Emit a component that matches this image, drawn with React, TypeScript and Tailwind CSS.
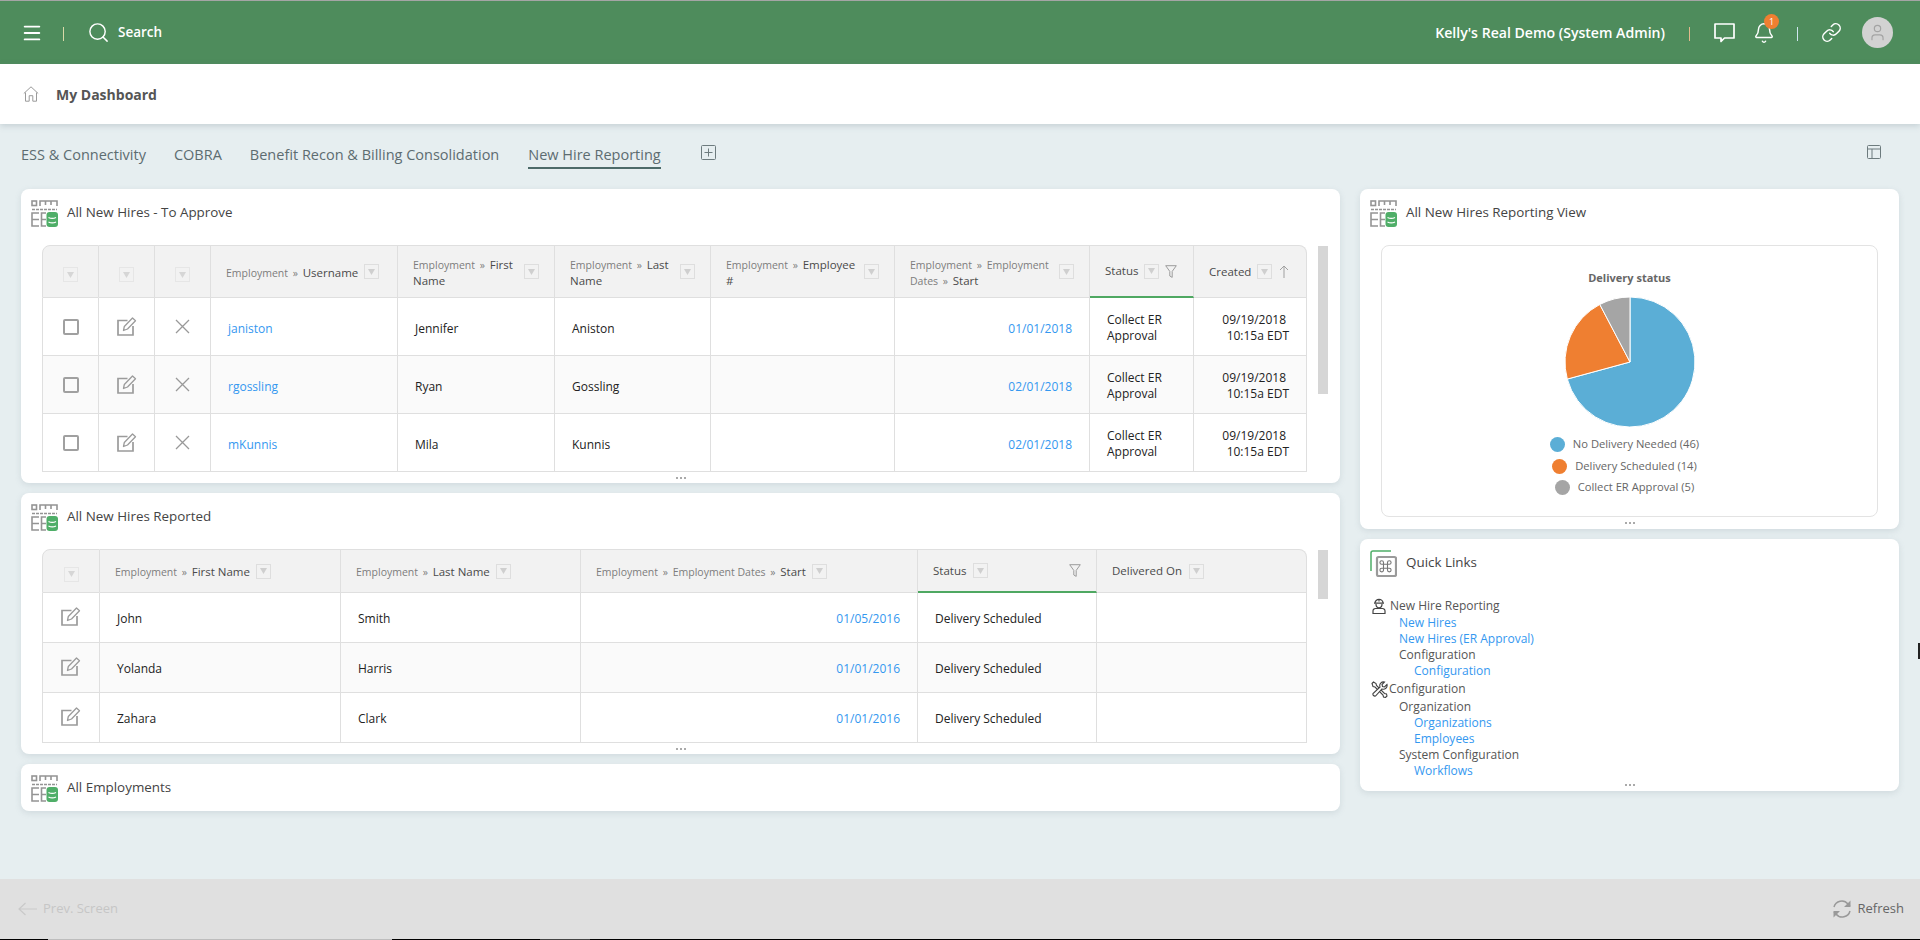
import { Bell, Link, Menu, Search, User } from 'lucide-react'

const font = { fontFamily: '"Open Sans", sans-serif' }

function GridDbIcon() {
  return (
    <svg width="27" height="27" viewBox="0 0 27 27" fill="none" className="shrink-0">
      <g stroke="#949494" strokeWidth="1.6">
        <rect x="1" y="1" width="4.5" height="4.5" />
        <path d="M9 6V1h17v5M14.5 1v4M20 1v4" />
        <path d="M1 9.500h25" strokeDasharray="3 1" />
        <path d="M8 13H1v13h7M1 19.500h7M15 13H10.500v13H15M10.500 19.500H15" />
      </g>
      <rect x="15.500" y="12" width="11.500" height="15" rx="3" fill="#4fae68" />
      <path d="M17.500 17.500c2 1 5.500 1 7.500 0M17.500 22c2 1 5.500 1 7.500 0" stroke="#fff" strokeWidth="1.3" />
    </svg>
  )
}

function QuickLinksIcon() {
  return (
    <svg width="27" height="27" viewBox="0 0 27 27" fill="none" className="shrink-0">
      <path d="M21 1H3a2 2 0 0 0-2 2v18" stroke="#4fae68" strokeWidth="1.5" />
      <rect x="7" y="7" width="19" height="19" rx="1.5" stroke="#9a9a9a" strokeWidth="2.2" fill="#fff" />
      <path
        d="M13.500 14.500v-2a1.800 1.800 0 1 0-1.800 1.800h7.600a1.800 1.800 0 1 0-1.800-1.800v7.600a1.800 1.800 0 1 0 1.800-1.800h-7.600a1.800 1.800 0 1 0 1.800 1.800z"
        stroke="#777"
        strokeWidth="1.1"
      />
    </svg>
  )
}

function HeadBox({ faint }: { faint?: boolean }) {
  return (
    <span
      className={`inline-flex h-[15px] w-[15px] shrink-0 items-center justify-center border ${
        faint ? 'border-[#e6e6e6]' : 'border-[#dedede]'
      }`}
    >
      <svg width="7" height="6" viewBox="0 0 7 6">
        <path d="M0 0h7L3.500 6z" fill={faint ? '#d6d6d6' : '#cfcfcf'} />
      </svg>
    </span>
  )
}

function EditIcon() {
  return (
    <svg width="20" height="19" viewBox="0 0 20 19" fill="none" stroke="#9b9b9b">
      <path d="M10.500 3.500H1v14.500h15V9" strokeWidth="1.700" />
      <path d="M6.500 13.500l.8-4L15.500 1l3 2.700-8 8.300z" strokeWidth="1.300" strokeLinejoin="round" />
    </svg>
  )
}

function CloseIcon() {
  return (
    <svg width="15" height="15" viewBox="0 0 15 15" fill="none" stroke="#999" strokeWidth="1.3">
      <path d="M1 1l13 13M14 1L1 14" />
    </svg>
  )
}

function FilterIcon() {
  return (
    <svg width="12" height="13" viewBox="0 0 12 13" fill="none" stroke="#9c9c9c" strokeWidth="1">
      <path d="M.7.7h10.600L7.200 6.400v6L4.800 11V6.400z" />
    </svg>
  )
}

function Dots() {
  return (
    <div className="flex h-[11px] items-center justify-center gap-[2px]">
      <span className="h-[2px] w-[2px] bg-[#aaa]" />
      <span className="h-[2px] w-[2px] bg-[#aaa]" />
      <span className="h-[2px] w-[2px] bg-[#aaa]" />
    </div>
  )
}

function Crumb({ parts, last }: { parts: string[]; last: string }) {
  return (
    <div className="flex items-center gap-[6px] text-left">
      <span className="leading-[14px]">
        {parts.map((p) => (
          <span key={p} className="text-[10.5px] text-[#7d7d7d]">
            {p} <span className="mx-[2px]">»</span>{' '}
          </span>
        ))}
        <span className="text-[11.5px] text-[#4a4a4a]">{last}</span>
      </span>
      <HeadBox />
    </div>
  )
}

const thBase = 'border-r border-b border-t border-[#dfdfdf] bg-[#f2f2f2] px-[15px] align-middle font-normal'
const tdBase = 'border-r border-b border-[#dfdfdf] px-[17px] text-[12px] text-[#222] align-middle'

const approveRows = [
  { user: 'janiston', first: 'Jennifer', last: 'Aniston', start: '01/01/2018' },
  { user: 'rgossling', first: 'Ryan', last: 'Gossling', start: '02/01/2018' },
  { user: 'mKunnis', first: 'Mila', last: 'Kunnis', start: '02/01/2018' },
]

const reportedRows = [
  { first: 'John', last: 'Smith', start: '01/05/2016' },
  { first: 'Yolanda', last: 'Harris', start: '01/01/2016' },
  { first: 'Zahara', last: 'Clark', start: '01/01/2016' },
]

function ApproveTable() {
  return (
    <table className="w-[1265px] table-fixed border-separate border-spacing-0">
      <thead>
        <tr className="h-[53px]">
          <th className={`${thBase} w-[57px] rounded-tl-[8px] border-l !px-0`}>
            <HeadBox faint />
          </th>
          <th className={`${thBase} w-[56px] !px-0`}>
            <HeadBox faint />
          </th>
          <th className={`${thBase} w-[56px] !px-0`}>
            <HeadBox faint />
          </th>
          <th className={`${thBase} w-[187px]`}>
            <Crumb parts={['Employment']} last="Username" />
          </th>
          <th className={`${thBase} w-[157px]`}>
            <Crumb parts={['Employment']} last="First Name" />
          </th>
          <th className={`${thBase} w-[156px]`}>
            <Crumb parts={['Employment']} last="Last Name" />
          </th>
          <th className={`${thBase} w-[184px]`}>
            <Crumb parts={['Employment']} last="Employee #" />
          </th>
          <th className={`${thBase} w-[195px]`}>
            <Crumb parts={['Employment', 'Employment Dates']} last="Start" />
          </th>
          <th className={`${thBase} w-[104px] !border-b-2 !border-b-[#4fa862] !pr-[8px]`}>
            <div className="flex items-center gap-[6px] text-[11.5px] text-[#4a4a4a]">
              Status <HeadBox /> <FilterIcon />
            </div>
          </th>
          <th className={`${thBase} w-[113px] rounded-tr-[8px] !pr-[8px]`}>
            <div className="flex items-center gap-[6px] text-[11.5px] text-[#4a4a4a]">
              Created <HeadBox />
              <svg width="10" height="13" viewBox="0 0 10 13" fill="none" stroke="#a0a0a0" strokeWidth="1" className="ml-px">
                <path d="M5 13V1M1 5l4-4 4 4" />
              </svg>
            </div>
          </th>
        </tr>
      </thead>
      <tbody>
        {approveRows.map((r, i) => (
          <tr key={r.user} className={`h-[58px] ${i === 1 ? 'bg-[#fafafa]' : 'bg-white'}`}>
            <td className={`${tdBase} border-l !px-0`}>
              <div className="flex justify-center">
                <span className="h-[16px] w-[16px] rounded-[2px] border-2 border-[#a0a0a0]" />
              </div>
            </td>
            <td className={`${tdBase} !px-0`}>
              <div className="flex justify-center">
                <EditIcon />
              </div>
            </td>
            <td className={`${tdBase} !px-0`}>
              <div className="flex justify-center">
                <CloseIcon />
              </div>
            </td>
            <td className={`${tdBase} pt-[4px]`}>
              <a className="text-[#3498f0]">{r.user}</a>
            </td>
            <td className={`${tdBase} pt-[4px]`}>{r.first}</td>
            <td className={`${tdBase} pt-[4px]`}>{r.last}</td>
            <td className={tdBase} />
            <td className={`${tdBase} pt-[4px] text-right text-[#3498f0]`}>{r.start}</td>
            <td className={`${tdBase} pt-[2px] leading-[16px]`}>
              Collect ER
              <br />
              Approval
            </td>
            <td className={`${tdBase} !pl-0 pt-[2px] text-right leading-[16px]`}>
              <span className="pr-[3px]">09/19/2018</span>
              <br />
              10:15a EDT
            </td>
          </tr>
        ))}
      </tbody>
    </table>
  )
}

function ReportedTable() {
  return (
    <table className="w-[1265px] table-fixed border-separate border-spacing-0">
      <thead>
        <tr className="h-[44px]">
          <th className={`${thBase} w-[58px] rounded-tl-[8px] border-l !px-0`}>
            <HeadBox faint />
          </th>
          <th className={`${thBase} w-[241px]`}>
            <Crumb parts={['Employment']} last="First Name" />
          </th>
          <th className={`${thBase} w-[240px]`}>
            <Crumb parts={['Employment']} last="Last Name" />
          </th>
          <th className={`${thBase} w-[337px]`}>
            <Crumb parts={['Employment', 'Employment Dates']} last="Start" />
          </th>
          <th className={`${thBase} w-[179px] !border-b-2 !border-b-[#4fa862]`}>
            <div className="flex items-center justify-between text-[11.5px] text-[#4a4a4a]">
              <span className="flex items-center gap-[7px]">
                Status <HeadBox />
              </span>
              <FilterIcon />
            </div>
          </th>
          <th className={`${thBase} rounded-tr-[8px]`}>
            <div className="flex items-center gap-[7px] text-[11.5px] text-[#4a4a4a]">
              Delivered On <HeadBox />
            </div>
          </th>
        </tr>
      </thead>
      <tbody>
        {reportedRows.map((r, i) => (
          <tr key={r.first} className={`h-[50px] ${i === 1 ? 'bg-[#fafafa]' : 'bg-white'}`}>
            <td className={`${tdBase} border-l !px-0`}>
              <div className="mb-[2px] flex justify-center">
                <EditIcon />
              </div>
            </td>
            <td className={`${tdBase} pt-[2px]`}>{r.first}</td>
            <td className={`${tdBase} pt-[2px]`}>{r.last}</td>
            <td className={`${tdBase} pt-[2px] text-right text-[#3498f0]`}>{r.start}</td>
            <td className={`${tdBase} pt-[2px]`}>Delivery Scheduled</td>
            <td className={tdBase} />
          </tr>
        ))}
      </tbody>
    </table>
  )
}

function Card({ title, icon, children }: { title: string; icon?: React.ReactNode; children?: React.ReactNode }) {
  return (
    <section className="rounded-[8px] bg-white shadow-[0_2px_6px_rgba(120,140,150,0.2)]">
      <div className="flex items-center gap-[9px] pt-[11px] pl-[10px]">
        {icon ?? <GridDbIcon />}
        <h2 className="pb-[2px] text-[13.4px] font-medium text-[#444]">{title}</h2>
      </div>
      {children}
    </section>
  )
}

function PieChart() {
  const r = 65
  const arc = (deg: number) => {
    const a = (deg * Math.PI) / 180
    return `${r + r * Math.sin(a)} ${r - r * Math.cos(a)}`
  }
  const slices = [
    { from: 0, to: (46 / 65) * 360, fill: '#5baed6' },
    { from: (46 / 65) * 360, to: (60 / 65) * 360, fill: '#ef7f31' },
    { from: (60 / 65) * 360, to: 360, fill: '#a5a5a5' },
  ]
  return (
    <svg width="130" height="130" viewBox="0 0 130 130">
      {slices.map((s) => (
        <path
          key={s.fill}
          d={`M${r} ${r}L${arc(s.from)}A${r} ${r} 0 ${s.to - s.from > 180 ? 1 : 0} 1 ${arc(s.to)}Z`}
          fill={s.fill}
          stroke="#fff"
          strokeWidth="1"
        />
      ))}
    </svg>
  )
}

const legend = [
  { label: 'No Delivery Needed (46)', color: 'bg-[#5baed6]' },
  { label: 'Delivery Scheduled (14)', color: 'bg-[#ef7f31]' },
  { label: 'Collect ER Approval (5)', color: 'bg-[#a5a5a5]' },
]

function QuickLine({ text, link, indent }: { text: string; link?: boolean; indent: 1 | 2 }) {
  return (
    <div
      className={`h-[16px] leading-[16px] ${indent === 1 ? 'pl-[39px]' : 'pl-[54px]'} ${
        link ? 'text-[#3498f0]' : 'text-[#555]'
      }`}
    >
      {text}
    </div>
  )
}

export default function App() {
  return (
    <div className="relative flex h-screen flex-col overflow-hidden bg-[#e6eef0]" style={font}>
      <header className="flex h-[64px] shrink-0 items-center border-t border-[#a5a5a5] bg-[#4e8c5c] text-white">
        <Menu size={22} strokeWidth={2} className="ml-[21px]" />
        <span className="ml-[20px] mt-[3px] h-[14px] w-px bg-[#d9d9a8]" />
        <Search size={23} strokeWidth={1.5} className="ml-[23px]" />
        <span className="ml-[8px] text-[13.5px] font-semibold">Search</span>
        <span className="ml-auto text-[14.1px] font-semibold">Kelly's Real Demo (System Admin)</span>
        <span className="ml-[24px] mt-[3px] h-[14px] w-px bg-[#e3b98c]" />
        <svg width="21" height="20" viewBox="0 0 21 20" fill="none" stroke="#fff" strokeWidth="1.7" className="ml-[24px]">
          <path d="M1 1h19v14h-9.500L7 18.500V15H1z" strokeLinejoin="round" />
        </svg>
        <span className="relative ml-[18px] flex">
          <Bell size={22} strokeWidth={1.6} />
          <span className="absolute -top-[8px] left-[11px] flex h-[15px] w-[15px] items-center justify-center rounded-full bg-[#ef7f31] text-[9px] leading-none">
            1
          </span>
        </span>
        <span className="ml-[22px] mt-[3px] h-[14px] w-px bg-[#cfe6f0]" />
        <Link size={21} strokeWidth={1.7} className="ml-[23px]" />
        <span className="ml-[20px] mr-[27px] flex h-[31px] w-[31px] items-center justify-center rounded-full bg-[#d2d2d2]">
          <User size={19} strokeWidth={1.5} className="text-[#a3a3a3]" />
        </span>
      </header>

      <div className="z-10 flex h-[60px] shrink-0 items-center bg-white pl-[23px] shadow-[0_2px_6px_rgba(100,120,130,0.25)]">
        <svg width="16" height="16" viewBox="0 0 16 16" fill="none" stroke="#9a9a9a" strokeWidth="1">
          <path d="M.8 7.500 8 .8l7.200 6.700M2.500 6.500v8.700h3.700V9.700h3.600v5.500h3.700V6.500" />
        </svg>
        <span className="ml-[17px] text-[14px] font-bold text-[#555]">My Dashboard</span>
      </div>

      <nav className="flex h-[65px] shrink-0 items-start pt-[20px] pl-[21px] text-[14.5px] text-[#5d6c70]">
        <span className="mr-[28px] h-[25px]">ESS &amp; Connectivity</span>
        <span className="mr-[28px] h-[25px]">COBRA</span>
        <span className="mr-[29px] h-[25px]">Benefit Recon &amp; Billing Consolidation</span>
        <span className="h-[25px] border-b-2 border-[#4d6a69]">New Hire Reporting</span>
        <svg width="15" height="15" viewBox="0 0 15 15" fill="none" stroke="#6d7b7e" className="ml-[40px] mt-[1px]">
          <rect x=".5" y=".5" width="14" height="14" rx="1" />
          <path d="M7.500 3.500v8M3.500 7.500h8" />
        </svg>
        <svg width="14" height="14" viewBox="0 0 14 14" fill="none" stroke="#6d7b7e" className="ml-auto mr-[39px] mt-[1px]">
          <rect x=".5" y=".5" width="13" height="13" rx="1" />
          <path d="M.5 4h13M5 4v9.500" />
        </svg>
      </nav>

      <main className="flex min-h-0 flex-1 items-start gap-[20px] px-[21px]">
        <div className="flex w-[1319px] shrink-0 flex-col gap-[10px]">
          <Card title="All New Hires - To Approve">
            <div className="mt-[18px] flex items-start pl-[21px]">
              <ApproveTable />
              <div className="ml-[11px] mt-px h-[148px] w-[10px] bg-[#d6d6d6]" />
            </div>
            <Dots />
          </Card>
          <Card title="All New Hires Reported">
            <div className="mt-[18px] flex items-start pl-[21px]">
              <ReportedTable />
              <div className="ml-[11px] mt-px h-[49px] w-[10px] bg-[#d6d6d6]" />
            </div>
            <Dots />
          </Card>
          <Card title="All Employments">
            <div className="h-[9px]" />
          </Card>
        </div>

        <div className="flex w-[539px] shrink-0 flex-col gap-[10px]">
          <Card title="All New Hires Reporting View">
            <div className="mx-[21px] mt-[18px] flex h-[272px] flex-col items-center rounded-[8px] border border-[#e3e3e3] pt-[24px]">
              <div className="text-[11px] font-bold leading-[16px] text-[#666]">Delivery status</div>
              <div className="mt-[11px] flex">
                <PieChart />
              </div>
              <div className="mr-[10px] mt-[7px] flex flex-col items-center">
                {legend.map((l) => (
                  <div key={l.label} className="flex h-[21.4px] items-center gap-[8px] text-[11.2px] text-[#666]">
                    <span className={`h-[15px] w-[15px] rounded-full ${l.color}`} />
                    {l.label}
                  </div>
                ))}
              </div>
            </div>
            <Dots />
            <div className="h-px" />
          </Card>

          <Card title="Quick Links" icon={<QuickLinksIcon />}>
            <div className="mt-[20px] text-[12px]">
              <div className="flex h-[18px] items-center gap-[4px] pl-[12px] text-[#555]">
                <svg width="14" height="16" viewBox="0 0 14 16" fill="none" stroke="#444" strokeWidth="1.2">
                  <path d="M3 5a4 3.600 0 0 1 8 0M2 5.200h10M4 6c0 5 6 5 6 0" />
                  <path d="M1 15.500V13a2.500 2.500 0 0 1 2.500-2.500h7A2.500 2.500 0 0 1 13 13v2.500z" />
                  <path d="M7 1v2.500" />
                </svg>
                New Hire Reporting
              </div>
              <QuickLine text="New Hires" link indent={1} />
              <QuickLine text="New Hires (ER Approval)" link indent={1} />
              <QuickLine text="Configuration" indent={1} />
              <QuickLine text="Configuration" link indent={2} />
              <div className="flex h-[20px] items-center gap-[1px] pl-[11px] text-[#555]">
                <svg width="17" height="17" viewBox="0 0 17 17" fill="none" stroke="#444" strokeWidth="1.1">
                  <path d="M1 2.500 2.500 1l2.500 1.500.5 2 8 8 2 .5.5 2-1.500 1.500-2-.5-.5-2-8-8-2-.5z" />
                  <path d="M16 3.500l-2.500 2.500-2-.5-.5-2L13.500 1A3.800 3.800 0 0 0 9 6L2 12.500A2 2 0 0 0 4.500 15L11 8a3.800 3.800 0 0 0 5-4.500z" fill="#fff" />
                </svg>
                Configuration
              </div>
              <QuickLine text="Organization" indent={1} />
              <QuickLine text="Organizations" link indent={2} />
              <QuickLine text="Employees" link indent={2} />
              <QuickLine text="System Configuration" indent={1} />
              <QuickLine text="Workflows" link indent={2} />
            </div>
            <Dots />
            <div className="h-px" />
          </Card>
        </div>
      </main>

      <footer className="flex h-[60px] shrink-0 items-center bg-[#e0e0e0] pl-[18px] pr-[16px] text-[13px]">
        <svg width="19" height="14" viewBox="0 0 19 14" fill="none" stroke="#c9c9c9" strokeWidth="1.2">
          <path d="M19 7H1M7.500 1 1 7l6.500 6" />
        </svg>
        <span className="ml-[6px] text-[#c6c6c6]">Prev. Screen</span>
        <svg width="20" height="20" viewBox="0 0 20 20" fill="none" stroke="#999" strokeWidth="1.5" className="ml-auto">
          <path d="M2 8a8 8 0 0 1 14-3l2 2M18 12a8 8 0 0 1-14 3l-2-2" />
          <path d="M18.500 1.500V8H12zM1.500 18.500V12H8z" fill="#999" stroke="none" />
        </svg>
        <span className="ml-[6px] text-[#666]">Refresh</span>
      </footer>

      {/* strip of the window below the page */}
      <div className="flex h-px shrink-0 bg-black">
        <span className="ml-[48px] w-[344px] bg-[#bdbdbd]" />
        <span className="ml-[148px] w-[50px] bg-[#444]" />
      </div>

      {/* mouse cursor */}
      <div className="absolute right-0 top-[643px] h-[16px] w-[2px] bg-[#222]" />
    </div>
  )
}
